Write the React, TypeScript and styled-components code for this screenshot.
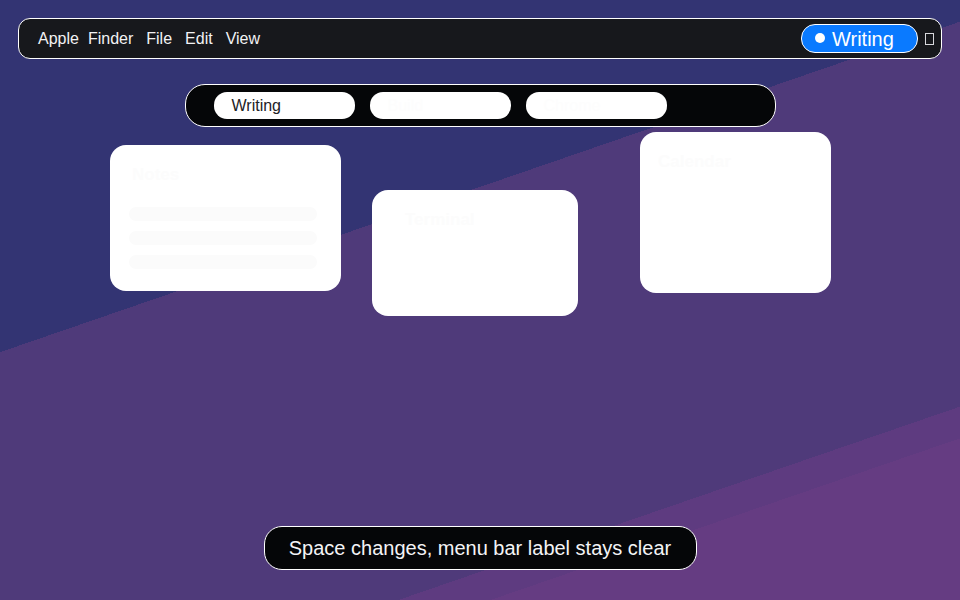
import React from "react";
import styled, { createGlobalStyle } from "styled-components";

const GlobalStyle = createGlobalStyle`
  html, body {
    margin: 0;
    padding: 0;
  }
  body {
    font-family: "Liberation Sans", Arial, sans-serif;
  }
`;

const spaces = ["Writing", "Build", "Chrome"];
const menuItems = ["Apple", "Finder", "File", "Edit", "View"];

interface WindowCard {
  title: string;
  left: number;
  top: number;
  width: number;
  height: number;
  rows: number;
  pad: number;
}

const windows: WindowCard[] = [
  { title: "Notes", left: 110, top: 145, width: 231, height: 146, rows: 3, pad: 22 },
  { title: "Terminal", left: 372, top: 190, width: 206, height: 126, rows: 0, pad: 33 },
  { title: "Calendar", left: 640, top: 132, width: 191, height: 161, rows: 0, pad: 18 },
];

function App() {
  return (
    <>
      <GlobalStyle />
      <Desktop>
        <MenuBar>
          <MenuItems>
            {menuItems.map((item, i) => (
              <MenuItem key={item} first={i === 0}>
                {item}
              </MenuItem>
            ))}
          </MenuItems>
          <StatusArea>
            <SpacePill>
              <Dot />
              Writing
            </SpacePill>
            <Tofu />
          </StatusArea>
        </MenuBar>

        <Switcher>
          {spaces.map((name, i) => (
            <SpaceChip key={name} active={i === 0}>
              {name}
            </SpaceChip>
          ))}
        </Switcher>

        <WindowLayer>
          {windows.map((w) => (
            <Window
              key={w.title}
              style={{ left: w.left, top: w.top, width: w.width, height: w.height }}
              pad={w.pad}
            >
              <WindowTitle>{w.title}</WindowTitle>
              {w.rows > 0 && (
                <Rows>
                  {Array.from({ length: w.rows }).map((_, i) => (
                    <Row key={i} />
                  ))}
                </Rows>
              )}
            </Window>
          ))}
        </WindowLayer>

        <Toast>Space changes, menu bar label stays clear</Toast>
      </Desktop>
    </>
  );
}

export default App;

const Desktop = styled.div`
  position: relative;
  width: 960px;
  height: 600px;
  box-sizing: border-box;
  padding: 18px 18px 30px;
  display: flex;
  flex-direction: column;
  overflow: hidden;
  background: linear-gradient(
    161deg,
    #333473 0px,
    #333473 333px,
    #4f3a7a 333px,
    #4f3a7a 697px,
    #5e3b80 697px,
    #5e3b80 727px,
    #653c82 727px
  );
`;

const MenuBar = styled.div`
  height: 41px;
  box-sizing: border-box;
  border: 1px solid #ffffff;
  border-radius: 12px;
  background-color: #17181c;
  display: flex;
  align-items: center;
  justify-content: space-between;
  padding: 0 7px 0 19px;
`;

const MenuItems = styled.div`
  display: flex;
  align-items: center;
  gap: 13px;
`;

const MenuItem = styled.span<{ first: boolean }>`
  color: #f2f2f4;
  font-size: 16px;
  line-height: 20px;
  margin-right: ${(p) => (p.first ? "-4px" : "0")};
`;

const StatusArea = styled.div`
  display: flex;
  align-items: center;
  gap: 7px;
`;

const SpacePill = styled.div`
  height: 29px;
  width: 117px;
  box-sizing: border-box;
  border: 1px solid #ffffff;
  border-radius: 14px;
  background-color: #0a7aff;
  color: #ffffff;
  font-size: 20px;
  display: flex;
  align-items: center;
  gap: 7px;
  padding-left: 13px;
  padding-top: 2px;
`;

const Dot = styled.span`
  width: 10px;
  height: 10px;
  border-radius: 50%;
  background-color: #ffffff;
  flex-shrink: 0;
  margin-top: -3px;
`;

const Tofu = styled.span`
  width: 7px;
  height: 10px;
  border: 1px solid #d8d8dc;
  display: inline-block;
`;

const Switcher = styled.div`
  align-self: center;
  margin-top: 25px;
  width: 591px;
  height: 43px;
  box-sizing: border-box;
  border: 1px solid #ffffff;
  border-radius: 20px;
  background-color: #050608;
  display: flex;
  align-items: center;
  gap: 15px;
  padding-left: 28px;
`;

const SpaceChip = styled.div<{ active: boolean }>`
  width: 141px;
  height: 27px;
  box-sizing: border-box;
  border-radius: 13px;
  background-color: #ffffff;
  color: ${(p) => (p.active ? "#222226" : "#fdfdfd")};
  font-size: 16px;
  display: flex;
  align-items: center;
  padding-left: 18px;
`;

const WindowLayer = styled.div`
  position: absolute;
  inset: 0;
  pointer-events: none;
`;

const Window = styled.div<{ pad: number }>`
  position: absolute;
  box-sizing: border-box;
  background-color: #ffffff;
  border-radius: 16px;
  padding: 20px ${(p) => p.pad}px;
  display: flex;
  flex-direction: column;
`;

const WindowTitle = styled.div`
  color: #fcfcfc;
  font-size: 17px;
  font-weight: 700;
`;

const Rows = styled.div`
  margin-top: 22px;
  display: flex;
  flex-direction: column;
  gap: 10px;
  margin-right: 2px;
  margin-left: -3px;
`;

const Row = styled.div`
  height: 14px;
  border-radius: 7px;
  background-color: #fbfbfb;
`;

const Toast = styled.div`
  margin-top: auto;
  align-self: center;
  width: 433px;
  height: 44px;
  box-sizing: border-box;
  border: 1px solid #ffffff;
  border-radius: 18px;
  background-color: #050608;
  color: #f4f4f6;
  font-size: 20px;
  display: flex;
  align-items: center;
  justify-content: center;
`;
